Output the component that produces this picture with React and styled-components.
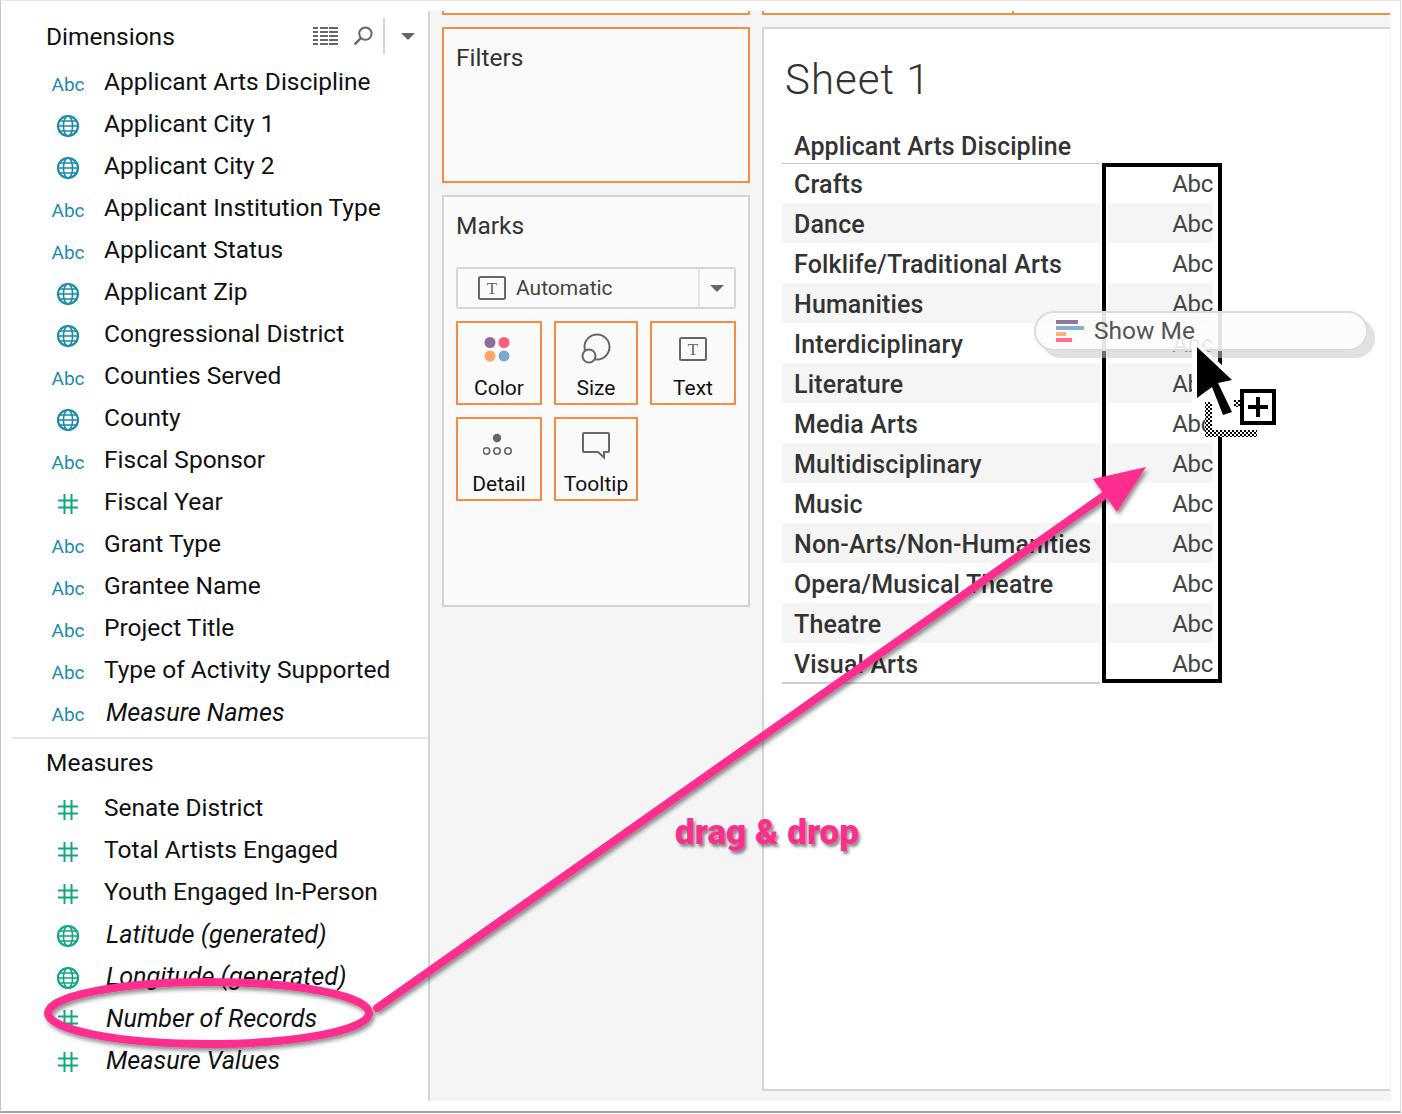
import React from "react";
import styled, { createGlobalStyle } from "styled-components";

const dimensions = [
  ["abc", "Applicant Arts Discipline"],
  ["geo", "Applicant City 1"],
  ["geo", "Applicant City 2"],
  ["abc", "Applicant Institution Type"],
  ["abc", "Applicant Status"],
  ["geo", "Applicant Zip"],
  ["geo", "Congressional District"],
  ["abc", "Counties Served"],
  ["geo", "County"],
  ["abc", "Fiscal Sponsor"],
  ["num", "Fiscal Year"],
  ["abc", "Grant Type"],
  ["abc", "Grantee Name"],
  ["abc", "Project Title"],
  ["abc", "Type of Activity Supported"],
  ["abc", "Measure Names", true],
];

const measures = [
  ["num", "Senate District"],
  ["num", "Total Artists Engaged"],
  ["num", "Youth Engaged In-Person"],
  ["geo", "Latitude (generated)", true],
  ["geo", "Longitude (generated)", true],
  ["num", "Number of Records", true],
  ["num", "Measure Values", true],
];

const disciplines = [
  "Crafts",
  "Dance",
  "Folklife/Traditional Arts",
  "Humanities",
  "Interdiciplinary",
  "Literature",
  "Media Arts",
  "Multidisciplinary",
  "Music",
  "Non-Arts/Non-Humanities",
  "Opera/Musical Theatre",
  "Theatre",
  "Visual Arts",
];

const BLUE = "#1a8bab";
const GREEN = "#11a683";
const ORANGE = "#f68c42";
const PINK = "#fd2e8e";
const SANS = `Roboto, "Liberation Sans", sans-serif`;

const GlobalStyle = createGlobalStyle`
  html, body {
    margin: 0;
    padding: 0;
    background: #fff;
  }
  * {
    box-sizing: border-box;
  }
`;

const Page = styled.div`
  position: relative;
  width: 1402px;
  height: 1114px;
  overflow: hidden;
  background: #fff;
  font-family: ${SANS};
`;

const Frame = styled.div`
  display: flex;
  width: 1401px;
  height: 1113px;
  border-top: 1px solid #e8e8e8;
  border-left: 1px solid #c4c4c4;
  border-right: 1px solid #dcdcdc;
  border-bottom: 2px solid #a4a4a4;
`;

const DataPane = styled.aside`
  flex: 0 0 427px;
`;

const PaneHeader = styled.div`
  display: flex;
  align-items: center;
  height: ${(p) => p.$height}px;
  padding: ${(p) => p.$top}px 0 ${(p) => p.$bottom}px 45px;
  font-size: 24.5px;
  color: #111;
`;

const PaneTitle = styled.span`
  flex: 1;
`;

const HeaderTools = styled.div`
  display: flex;
  align-items: center;
  height: 36px;
  padding-right: 13px;
`;

const ToolGap = styled.div`
  width: 15px;
`;

const ToolDivider = styled.div`
  width: 2px;
  height: 36px;
  margin: 0 16px 0 10px;
  background: #d0d0d0;
`;

const Caret = styled.div`
  width: 0;
  height: 0;
  border-left: 7px solid transparent;
  border-right: 7px solid transparent;
  border-top: 7px solid #666;
`;

const FieldRow = styled.div`
  display: grid;
  grid-template-columns: 44px 1fr;
  column-gap: 14px;
  align-items: center;
  height: 42px;
  padding-left: 45px;
  font-size: ${(p) => (p.$italic ? "25.2px" : "24.5px")};
  font-style: ${(p) => (p.$italic ? "italic" : "normal")};
  color: #111;
`;

const FieldName = styled.span`
  padding-bottom: ${(p) => (p.$italic ? 0 : 2)}px;
  padding-left: ${(p) => (p.$italic ? 2 : 0)}px;
`;

const IconCell = styled.div`
  display: flex;
  justify-content: center;
  align-items: center;
  padding-top: 3px;
`;

const AbcTag = styled.span`
  margin-top: 1px;
  font-size: 19px;
  font-style: normal;
  color: ${BLUE};
`;

const PaneDivider = styled.div`
  height: 2px;
  margin: 4px 0 0 11px;
  background: #e6e6e6;
`;

const Workspace = styled.main`
  display: flex;
  flex: 1;
  gap: 12px;
  height: 1090px;
  margin-top: 10px;
  padding-left: 12px;
  margin-right: 9px;
  background: #f5f5f5;
  border-left: 2px solid #d4d4d4;
`;

const Column = styled.div`
  display: flex;
  flex-direction: column;
  gap: 12px;
  width: ${(p) => p.$width}px;
`;

const ShelfRow = styled.div`
  display: flex;
  height: 4px;
  background: #fff;
`;

const ShelfStub = styled.div`
  flex: ${(p) => p.$grow};
  border: 2px solid ${ORANGE};
  border-top: none;
  ${(p) => (p.$open ? "border-right: none;" : "")}
`;

const Card = styled.section`
  height: ${(p) => p.$height}px;
  padding: 13px 11px 0 12px;
  background: #fafafa;
  border: 2px solid ${(p) => (p.$active ? ORANGE : "#d4d4d4")};
`;

const CardTitle = styled.div`
  font-size: 24.5px;
  line-height: 32px;
  color: #333;
`;

const MarkSelect = styled.div`
  display: flex;
  align-items: center;
  width: 280px;
  height: 42px;
  margin-top: 25px;
  padding-left: 20px;
  border: 2px solid #d4d4d4;
  border-radius: 3px;
  font-size: 21px;
  color: #444;
`;

const SelectLabel = styled.span`
  flex: 1;
  margin-left: 10px;
`;

const SelectArrow = styled.div`
  display: flex;
  justify-content: center;
  align-items: center;
  width: 36px;
  height: 100%;
  border-left: 2px solid #e4e4e4;
`;

const MarkGrid = styled.div`
  display: grid;
  grid-template-columns: 86px 84px 86px;
  grid-auto-rows: 84px;
  gap: 12px;
  margin-top: 12px;
`;

const MarkButton = styled.div`
  display: flex;
  flex-direction: column;
  align-items: center;
  padding-top: 10px;
  border: 2px solid ${ORANGE};
  font-size: 21px;
  color: #111;
`;

const MarkIcon = styled.div`
  display: flex;
  align-items: center;
  height: 32px;
`;

const MarkLabel = styled.span`
  margin-top: 10px;
  line-height: 26px;
`;

const SheetCard = styled.section`
  height: 1064px;
  padding: 27px 0 0 18px;
  background: #fff;
  border: 2px solid #d4d4d4;
  border-right: none;
`;

const SheetTitle = styled.h1`
  margin: 0 0 0 3px;
  font-size: 42px;
  font-weight: 300;
  line-height: 48px;
  letter-spacing: 1px;
  color: #333;
`;

const TableHeader = styled.div`
  width: 318px;
  height: 38px;
  margin: 22px 0 -1px;
  padding: 3px 0 0 12px;
  border-bottom: 1px solid #c8c8c8;
  font-size: 25px;
  font-weight: 500;
  line-height: 36px;
  letter-spacing: 0.1px;
  color: #333;
`;

const TableRow = styled.div`
  display: grid;
  grid-template-columns: 318px 105px;
  grid-template-rows: 40px;
  column-gap: 8px;
  font-size: 25px;
  color: #333;
`;

const RowLabel = styled.div`
  height: 40px;
  padding: 2px 0 0 12px;
  font-weight: 500;
  line-height: 40px;
  letter-spacing: 0.15px;
  white-space: nowrap;
  background: ${(p) => (p.$striped ? "#f5f5f5" : "transparent")};
`;

const RowValue = styled.div`
  height: 40px;
  padding-top: 1px;
  font-size: 24px;
  line-height: 40px;
  letter-spacing: -0.3px;
  text-align: right;
  color: #444;
  background: ${(p) => (p.$striped ? "#f5f5f5" : "transparent")};
`;

const TableRule = styled.div`
  width: 318px;
  height: 2px;
  margin-top: -1px;
  background: #d0d0d0;
`;

const SelectionBox = styled.div`
  position: absolute;
  left: 1102px;
  top: 163px;
  width: 120px;
  height: 520px;
  border: 4px solid #000;
`;

const ShowMePill = styled.div`
  position: absolute;
  left: 1034px;
  top: 311px;
  display: flex;
  align-items: center;
  gap: 10px;
  width: 334px;
  height: 40px;
  padding-left: 20px;
  border: 2px solid #dcdcdc;
  border-radius: 20px;
  background: rgba(252, 252, 252, 0.9);
  box-shadow: 7px 7px 0 rgba(200, 200, 200, 0.55);
  font-size: 24.5px;
  color: #555;
`;

const ShowMeLabel = styled.span`
  padding-bottom: 2px;
`;

const Annotations = styled.svg`
  position: absolute;
  left: 0;
  top: 0;
  pointer-events: none;
`;

const DragLabel = styled.div`
  position: absolute;
  left: 675px;
  top: 811px;
  font-size: 35px;
  font-weight: 900;
  line-height: 44px;
  white-space: nowrap;
  color: ${PINK};
  text-shadow: 2px 3px 3px rgba(0, 0, 0, 0.45);
`;

function GlobeIcon({ color }) {
  return (
    <svg width="24" height="24" viewBox="0 0 24 24" fill="none" stroke={color} strokeWidth="2">
      <circle cx="12" cy="12" r="10" strokeWidth="2.2" />
      <ellipse cx="12" cy="12" rx="4.6" ry="10" strokeWidth="1.6" />
      <path d="M2 12h20M3.5 7h17M3.5 17h17" strokeWidth="1.6" />
    </svg>
  );
}

function HashIcon() {
  return (
    <svg width="22" height="22" viewBox="0 0 22 22" fill="none" stroke={GREEN} strokeWidth="2">
      <path d="M7.5 1v20M14.5 1v20M1 7.5h20M1 14.5h20" />
    </svg>
  );
}

function FieldIcon({ type, color }) {
  if (type === "abc") return <AbcTag>Abc</AbcTag>;
  if (type === "geo") return <GlobeIcon color={color} />;
  return <HashIcon />;
}

function ListIcon() {
  return (
    <svg width="25" height="19" viewBox="0 0 25 19" fill="#666">
      {[0, 4, 8, 12, 16].map((y) => (
        <g key={y}>
          <rect x="0" y={y} width="5" height="2" />
          <rect x="7" y={y} width="8" height="2" />
          <rect x="16" y={y} width="9" height="2" />
        </g>
      ))}
    </svg>
  );
}

function SearchIcon() {
  return (
    <svg width="20" height="20" viewBox="0 0 20 20" fill="none" stroke="#666" strokeWidth="2">
      <circle cx="12.4" cy="7.6" r="6.2" />
      <path d="M8 12L1.5 18.5" strokeWidth="2.4" />
    </svg>
  );
}

function TextBoxIcon() {
  return (
    <svg width="28" height="24" viewBox="0 0 28 24">
      <rect x="1" y="1" width="26" height="22" rx="1.5" fill="none" stroke="#666" strokeWidth="2" />
      <text x="14" y="18" textAnchor="middle" fontFamily="Liberation Serif, serif" fontSize="17" fill="#666">
        T
      </text>
    </svg>
  );
}

function ColorIcon() {
  return (
    <svg width="32" height="32" viewBox="0 0 32 32">
      <circle cx="7" cy="9.5" r="5.5" fill="#8e6c9a" />
      <circle cx="21" cy="9.5" r="5.5" fill="#ff5e78" />
      <circle cx="7" cy="23" r="5.5" fill="#ffa56c" />
      <circle cx="21" cy="23" r="5.5" fill="#79a9d1" />
    </svg>
  );
}

function SizeIcon() {
  return (
    <svg width="32" height="32" viewBox="0 0 32 32" fill="none" stroke="#666" strokeWidth="2">
      <circle cx="17" cy="14" r="12.5" />
      <circle cx="9" cy="23" r="6.5" fill="#fafafa" />
    </svg>
  );
}

function DetailIcon() {
  return (
    <svg width="32" height="32" viewBox="0 0 32 32" fill="none" stroke="#666" strokeWidth="1.6">
      <circle cx="14" cy="9" r="4.2" fill="#666" stroke="none" />
      <circle cx="3.5" cy="22" r="3.2" />
      <circle cx="14" cy="22" r="3.2" />
      <circle cx="25" cy="22" r="3.2" />
    </svg>
  );
}

function TooltipIcon() {
  return (
    <svg width="32" height="32" viewBox="0 0 32 32" fill="none" stroke="#666" strokeWidth="2">
      <path d="M4 4h24a1 1 0 0 1 1 1v17a1 1 0 0 1-1 1h-4v5.5l-6-5.5H4a1 1 0 0 1-1-1V5a1 1 0 0 1 1-1z" />
    </svg>
  );
}

function ShowMeIcon() {
  return (
    <svg width="28" height="22" viewBox="0 0 28 22">
      <rect x="0" y="0" width="22" height="4" fill="#8e7a9e" />
      <rect x="0" y="6" width="28" height="4" fill="#86aed3" />
      <rect x="0" y="12" width="10" height="4" fill="#ffb07c" />
      <rect x="0" y="18" width="16" height="4" fill="#ff7088" />
    </svg>
  );
}

function AnnotationLayer() {
  return (
    <Annotations width="1402" height="1114" viewBox="0 0 1402 1114">
      <defs>
        <filter id="inkShadow" x="-10%" y="-10%" width="120%" height="120%">
          <feDropShadow dx="2" dy="3" stdDeviation="2" floodColor="#000" floodOpacity="0.45" />
        </filter>
        <pattern id="checker" width="4" height="4" patternUnits="userSpaceOnUse">
          <rect width="4" height="4" fill="#000" />
          <rect width="2" height="2" fill="#fff" />
          <rect x="2" y="2" width="2" height="2" fill="#fff" />
        </pattern>
      </defs>
      <g filter="url(#inkShadow)">
        <ellipse cx="208.5" cy="1013" rx="160.5" ry="31" fill="none" stroke={PINK} strokeWidth="8" />
        <path d="M377 1008L1105 495" stroke={PINK} strokeWidth="8" strokeLinecap="round" />
        <path d="M1146 467L1093 479L1117 512Z" fill={PINK} />
      </g>
      <path d="M1192 345V403H1205V437H1257V425H1240V400L1226 388L1236 385V378L1200 345Z" fill="#fff" />
      <path d="M1205 402h7v28h45v7h-52zM1234 400h6v7h-6z" fill="url(#checker)" />
      <path d="M1197 347L1232 380L1218 383L1232 412L1223 415L1212 387L1197 398Z" fill="#000" />
      <rect x="1242" y="391" width="32" height="32" fill="#fff" stroke="#000" strokeWidth="4" />
      <path d="M1248 407h20M1258 397v20" stroke="#000" strokeWidth="4" />
    </Annotations>
  );
}

export default function App() {
  return (
    <>
      <GlobalStyle />
      <Page>
        <Frame>
          <DataPane>
            <PaneHeader $height={60} $top={10} $bottom={0}>
              <PaneTitle>Dimensions</PaneTitle>
              <HeaderTools>
                <ListIcon />
                <ToolGap />
                <SearchIcon />
                <ToolDivider />
                <Caret />
              </HeaderTools>
            </PaneHeader>
            {dimensions.map(([type, name, italic]) => (
              <FieldRow key={name} $italic={italic}>
                <IconCell>
                  <FieldIcon type={type} color={BLUE} />
                </IconCell>
                <FieldName $italic={italic}>{name}</FieldName>
              </FieldRow>
            ))}
            <PaneDivider />
            <PaneHeader $height={48} $top={0} $bottom={2}>
              <PaneTitle>Measures</PaneTitle>
            </PaneHeader>
            {measures.map(([type, name, italic]) => (
              <FieldRow key={name} $italic={italic}>
                <IconCell>
                  <FieldIcon type={type} color={GREEN} />
                </IconCell>
                <FieldName $italic={italic}>{name}</FieldName>
              </FieldRow>
            ))}
          </DataPane>
          <Workspace>
            <Column $width={308}>
              <ShelfRow>
                <ShelfStub $grow={1} />
              </ShelfRow>
              <Card $height={156} $active>
                <CardTitle>Filters</CardTitle>
              </Card>
              <Card $height={412}>
                <CardTitle>Marks</CardTitle>
                <MarkSelect>
                  <TextBoxIcon />
                  <SelectLabel>Automatic</SelectLabel>
                  <SelectArrow>
                    <Caret />
                  </SelectArrow>
                </MarkSelect>
                <MarkGrid>
                  <MarkButton>
                    <MarkIcon>
                      <ColorIcon />
                    </MarkIcon>
                    <MarkLabel>Color</MarkLabel>
                  </MarkButton>
                  <MarkButton>
                    <MarkIcon>
                      <SizeIcon />
                    </MarkIcon>
                    <MarkLabel>Size</MarkLabel>
                  </MarkButton>
                  <MarkButton>
                    <MarkIcon>
                      <TextBoxIcon />
                    </MarkIcon>
                    <MarkLabel>Text</MarkLabel>
                  </MarkButton>
                  <MarkButton>
                    <MarkIcon>
                      <DetailIcon />
                    </MarkIcon>
                    <MarkLabel>Detail</MarkLabel>
                  </MarkButton>
                  <MarkButton>
                    <MarkIcon>
                      <TooltipIcon />
                    </MarkIcon>
                    <MarkLabel>Tooltip</MarkLabel>
                  </MarkButton>
                </MarkGrid>
              </Card>
            </Column>
            <Column $width={628}>
              <ShelfRow>
                <ShelfStub $grow={250} $open />
                <ShelfStub $grow={378} $open />
              </ShelfRow>
              <SheetCard>
                <SheetTitle>Sheet 1</SheetTitle>
                <TableHeader>Applicant Arts Discipline</TableHeader>
                {disciplines.map((name, i) => (
                  <TableRow key={name}>
                    <RowLabel $striped={i % 2 === 1}>{name}</RowLabel>
                    <RowValue $striped={i % 2 === 1}>Abc</RowValue>
                  </TableRow>
                ))}
                <TableRule />
              </SheetCard>
            </Column>
          </Workspace>
        </Frame>
        <SelectionBox />
        <ShowMePill>
          <ShowMeIcon />
          <ShowMeLabel>Show Me</ShowMeLabel>
        </ShowMePill>
        <AnnotationLayer />
        <DragLabel>drag &amp; drop</DragLabel>
      </Page>
    </>
  );
}
